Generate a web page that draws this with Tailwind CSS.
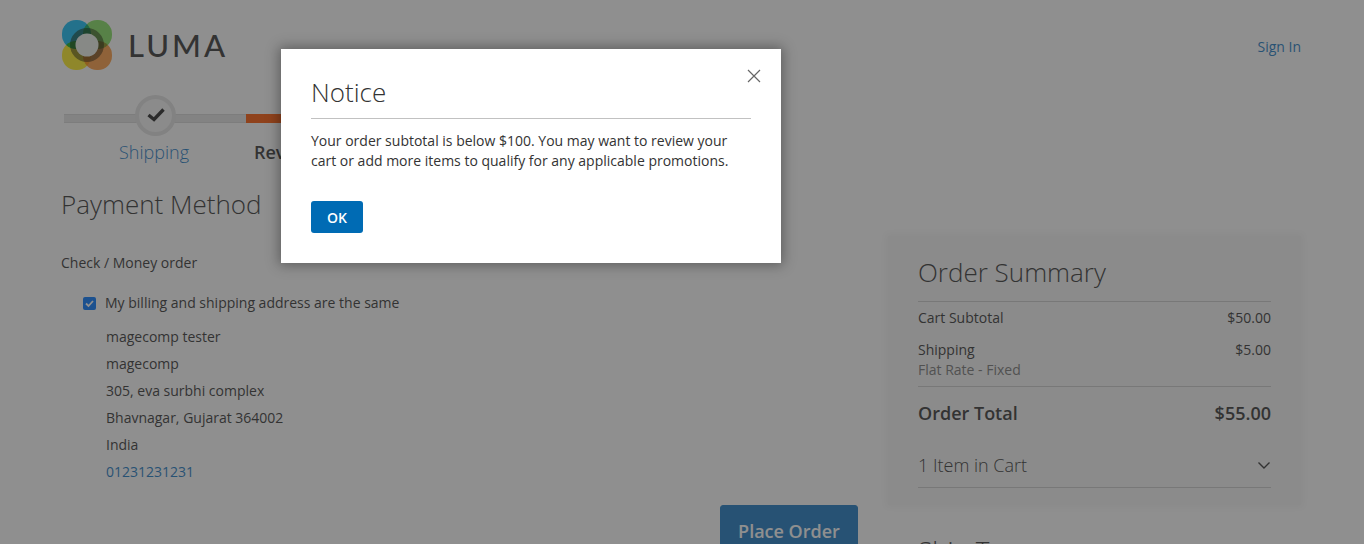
<!DOCTYPE html>
<html lang="en">
<head>
    <meta charset="UTF-8">
    <title>Checkout</title>
    <script src="https://cdn.jsdelivr.net/npm/@tailwindcss/browser@4"></script>
</head>
<body class="relative w-[1364px] h-[544px] overflow-hidden bg-white font-['Open_Sans',sans-serif] text-[14px] text-[#333]">

    <!-- page under the modal -->
    <div class="h-[544px] px-[61px]">
        <header class="flex items-start justify-between h-[95px] pt-[20px]">
            <div class="flex items-center gap-[16px] ml-[1px]">
                <svg width="50" height="50" viewBox="0 0 50 50" class="isolate">
                    <rect x="0" y="0" width="29" height="29" rx="14" fill="#10bcf5" class="mix-blend-multiply"/>
                    <rect x="21" y="0" width="29" height="29" rx="14" fill="#84e060" class="mix-blend-multiply"/>
                    <rect x="0" y="21" width="29" height="29" rx="14" fill="#ffee20" class="mix-blend-multiply"/>
                    <rect x="21" y="21" width="29" height="29" rx="14" fill="#ff9c40" class="mix-blend-multiply"/>
                    <circle cx="25" cy="25" r="17" fill="#8a8a70" class="mix-blend-multiply"/>
                    <circle cx="25" cy="25" r="11.5" fill="#eef2ea"/>
                </svg>
                <span class="text-[31px] font-medium tracking-[3px] text-[#333] font-['Lato',sans-serif] leading-none">LUMA</span>
            </div>
            <a class="mt-[7px] mr-[2px] pt-[10px] text-[#1979c3] leading-[20px]">Sign In</a>
        </header>

        <!-- progress bar -->
        <div class="relative h-[99px] w-[400px]">
            <div class="flex pt-[19px] ml-[3px]">
                <div class="w-[182px] h-[9px] bg-[#e4e4e4] border-y border-[#d8d8d8]"></div>
                <div class="w-[180px] h-[9px] bg-[#ff5501]"></div>
            </div>
            <div class="absolute left-[74px] top-0 flex items-center justify-center w-[41px] h-[41px] rounded-full bg-[#f5f5f5] border-[4px] border-[#e2e2e2]">
                <svg width="20" height="16" viewBox="0 0 20 16">
                    <path d="M2.5 7 L8 11.5 L17.5 1.5" fill="none" stroke="#222" stroke-width="3.4"/>
                </svg>
            </div>
            <div class="absolute left-[58px] top-[45px] text-[18px] font-light leading-[24px] text-[#1979c3]">Shipping</div>
            <div class="absolute left-[193px] top-[45px] text-[18px] font-semibold leading-[24px]">Review &amp; Payments</div>
        </div>

        <main class="flex justify-between">
            <section class="w-[797px]">
                <h1 class="text-[26px] font-light leading-[32px] mt-[-6px]">Payment Method</h1>
                <p class="mt-[33px] leading-[20px]">Check / Money order</p>
                <div class="flex items-center gap-[9px] mt-[20px] ml-[22px] leading-[20px]">
                    <span class="flex items-center justify-center w-[13px] h-[13px] rounded-[2px] bg-[#0075ff]">
                        <svg width="11" height="11" viewBox="0 0 11 11"><path d="M2 5.5 L4.5 8 L9 3" fill="none" stroke="#fff" stroke-width="1.8"/></svg>
                    </span>
                    <span>My billing and shipping address are the same</span>
                </div>
                <div class="flex flex-col mt-[10px] ml-[45px] leading-[27px]">
                    <span>magecomp tester</span>
                    <span>magecomp</span>
                    <span>305, eva surbhi complex</span>
                    <span>Bhavnagar, Gujarat 364002</span>
                    <span>India</span>
                    <a class="text-[#1979c3]">01231231231</a>
                </div>
                <div class="flex justify-end mt-[20px]">
                    <button class="w-[138px] h-[54px] pb-[2px] rounded-[3px] bg-[#1979c3] border border-[#1979c3] text-white text-[18px] font-semibold">Place Order</button>
                </div>
            </section>

            <div class="w-[413px] mt-[42px] mr-[2px]">
                <aside class="h-[269px] px-[30px] pt-[20px] bg-[#f6f6f6] shadow-[0_0_8px_3px_#f6f6f6]">
                    <h2 class="text-[26px] font-light leading-[32px] pb-[13px] border-b border-[#ccc]">Order Summary</h2>
                    <div class="flex justify-between mt-[6px] leading-[20px]">
                        <span>Cart Subtotal</span><span>$50.00</span>
                    </div>
                    <div class="flex justify-between mt-[12px] leading-[20px]">
                        <div class="flex flex-col">
                            <span>Shipping</span>
                            <span class="text-[#777]">Flat Rate - Fixed</span>
                        </div>
                        <span>$5.00</span>
                    </div>
                    <div class="flex justify-between items-center h-[53px] mt-[6px] border-t border-[#ccc] text-[18px] font-semibold">
                        <span>Order Total</span><span>$55.00</span>
                    </div>
                    <div class="flex justify-between items-center h-[48px] pt-[3px] mt-[1px] border-b border-[#ccc] text-[18px] font-light">
                        <span>1 Item in Cart</span>
                        <svg width="14" height="9" viewBox="0 0 14 9"><path d="M1.5 1.5 L7 7 L12.5 1.5" fill="none" stroke="#333" stroke-width="1.4"/></svg>
                    </div>
                </aside>
                <div class="mt-[29px] px-[30px] text-[26px] font-light leading-[32px]">Ship To:</div>
            </div>
        </main>
    </div>

    <!-- dimmed overlay -->
    <div class="absolute inset-0 bg-[#333]/55"></div>

    <!-- notice modal -->
    <div class="absolute left-[281px] top-[49px] w-[500px] h-[214px] px-[30px] bg-white shadow-[0_0_12px_2px_rgba(0,0,0,0.35)]">
        <button class="absolute right-[19px] top-[19px] w-[16px] h-[16px]">
            <svg width="16" height="16" viewBox="0 0 16 16"><path d="M2 2 L14 14 M14 2 L2 14" fill="none" stroke="#666" stroke-width="1.2"/></svg>
        </button>
        <h2 class="pt-[26px] pb-[8px] text-[26px] font-light leading-[35px] border-b border-[#c1c1c1]">Notice</h2>
        <p class="mt-[12px] leading-[20px]">Your order subtotal is below $100. You may want to review your cart or add more items to qualify for any applicable promotions.</p>
        <button class="block mt-[30px] w-[52px] h-[32px] rounded-[3px] bg-[#006bb4] text-white font-semibold">OK</button>
    </div>

</body>
</html>
